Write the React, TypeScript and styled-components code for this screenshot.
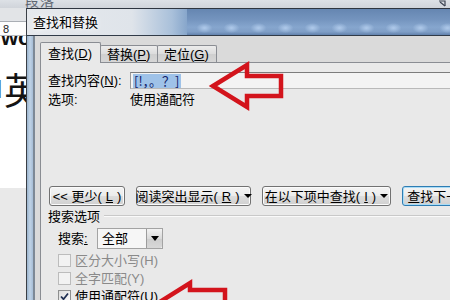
import React from "react";
import styled, { createGlobalStyle } from "styled-components";

const GlobalStyle = createGlobalStyle`
  html, body { margin: 0; padding: 0; }
  body { background: #ffffff; font-family: "Liberation Sans", "Noto Sans CJK SC", sans-serif; }
  #root { width: 450px; height: 300px; }
`;

const UI_FONT = `"Liberation Sans", "Noto Sans CJK SC", sans-serif`;

const Screen = styled.div`
  position: relative;
  width: 450px;
  height: 300px;
  overflow: hidden;
  display: flex;
  flex-direction: column;
  font-family: ${UI_FONT};
  font-size: 13px;
  color: #000;
  background: #fff;
`;

/* ---------- Word ribbon strip behind the dialog ---------- */
const Ribbon = styled.div`
  flex: none;
  height: 8px;
  display: flex;
  align-items: flex-end;
  padding-left: 25px;
  padding-right: 3px;
  overflow: hidden;
  background: linear-gradient(#dde1e6, #d0d4da);
`;

const RibbonLabel = styled.span`
  font-family: "Noto Sans CJK SC", sans-serif;
  font-size: 14px;
  line-height: 16px;
  color: #5d6570;
  letter-spacing: 1px;
`;

const RibbonLauncher = styled.svg`
  margin-left: auto;
  flex: none;
  align-self: flex-start;
`;

const Main = styled.div`
  flex: 1;
  display: flex;
  min-height: 0;
`;

/* ---------- document on the left ---------- */
const Doc = styled.div`
  flex: none;
  width: 26px;
  display: flex;
  flex-direction: column;
  overflow: hidden;
  background: #fff;
`;

const DocRibbonRest = styled.div`
  flex: none;
  height: 13px;
  background: #e2e4e7;
  border-bottom: 1px solid #a9adb3;
`;

const Ruler = styled.div`
  flex: none;
  height: 13px;
  display: flex;
  align-items: center;
  padding-left: 3px;
  font-size: 11px;
  color: #222;
  background: #fdfdfd;
  border-bottom: 1px solid #b7bbc1;
`;

const DocBody = styled.div`
  flex: 1;
  display: flex;
  flex-direction: column;
  background: #fff;
`;

const CutLine = styled.div`
  flex: none;
  height: 10px;
  display: flex;
  align-items: flex-end;
  overflow: hidden;
  padding-left: 1px;
`;

const BigLatin = styled.span`
  font-family: "Liberation Sans", sans-serif;
  font-weight: 700;
  font-size: 22px;
  line-height: 16px;
  color: #111;
  white-space: nowrap;
`;

const BigCjk = styled.div`
  flex: none;
  margin-top: 22px;
  margin-left: -33px;
  font-family: "Noto Sans CJK SC", sans-serif;
  font-size: 37px;
  line-height: 42px;
  color: #141414;
  white-space: nowrap;
`;

const DocPageEnd = styled.div`
  flex: 1;
  margin-top: 78px;
  background: #e9e9e9;
`;

/* ---------- dialog ---------- */
const Dialog = styled.div`
  flex: none;
  width: 440px;
  display: flex;
  flex-direction: column;
  border-left: 1px solid #3a3f46;
`;

const TitleBar = styled.div`
  flex: none;
  height: 26px;
  display: flex;
  border-top: 1px solid #2e3540;
  border-bottom: 1px solid #313b48;
`;

const TitleCaption = styled.div`
  flex: none;
  width: 160px;
  display: flex;
  align-items: center;
  padding-left: 6px;
  box-sizing: border-box;
  background: linear-gradient(90deg, #e6e9ed 0px, #dfe4ea 105px, #a9c0da 145px, #87a6cb 160px);
`;

const TitleGlass = styled.div`
  flex: 1;
  background-color: #809fc6;
  background-image: radial-gradient(ellipse 8px 5px at 50% 50%, rgba(178, 204, 236, 0.95), rgba(178, 204, 236, 0)),
    linear-gradient(180deg, #6586b1 0%, #7494be 40%, #86a6ce 70%, #7f9ec6 88%, #6282ad 100%);
  background-size: 27px 12px, 100% 100%;
  background-position: 4px 13px, 0 0;
  background-repeat: repeat-x, no-repeat;
`;

const TitleText = styled.span`
  font-family: "Noto Sans CJK SC", sans-serif;
  font-size: 13px;
  line-height: 16px;
  color: #000;
  white-space: nowrap;
  text-shadow: 0 0 6px #fff, 0 0 3px #fff;
`;

const DialogBody = styled.div`
  flex: 1;
  display: flex;
  min-height: 0;
`;

const FrameSide = styled.div`
  flex: none;
  width: 6px;
  background: linear-gradient(90deg, #9ab4ce, #c0d3e6 50%, #a6bdd6);
  border-right: 2px solid #7d8996;
`;

const Content = styled.div`
  flex: 1;
  display: flex;
  flex-direction: column;
  padding-left: 5px;
  background: #dadada;
`;

const TabStrip = styled.div`
  flex: none;
  height: 26px;
  display: flex;
  align-items: flex-end;
`;

const Tab = styled.div<{ $active?: boolean; $width: number }>`
  flex: none;
  box-sizing: border-box;
  width: ${(p) => p.$width}px;
  height: ${(p) => (p.$active ? 21 : 17)}px;
  margin-bottom: ${(p) => (p.$active ? -1 : 0)}px;
  position: relative;
  z-index: ${(p) => (p.$active ? 1 : 0)};
  display: flex;
  align-items: center;
  padding-left: ${(p) => (p.$active ? 7 : 6)}px;
  border: 1px solid #8a8d93;
  border-bottom: ${(p) => (p.$active ? "none" : "0")};
  border-radius: 2px 2px 0 0;
  background: ${(p) =>
    p.$active ? "#e9e9e9" : "linear-gradient(#ececec, #dcdcdc 50%, #cfcfcf 50%, #d6d6d6)"};
  font-size: 13px;
  line-height: 15px;
  color: #000;
  white-space: nowrap;
  & + & {
    margin-left: -1px;
  }
`;

const TabPanel = styled.div`
  flex: 1;
  display: flex;
  flex-direction: column;
  padding: 9px 0 0 7px;
  border-top: 1px solid #8a8d93;
  border-left: 1px solid #8a8d93;
  background: #e9e9e9;
`;

const FieldRow = styled.div<{ $top?: number }>`
  flex: none;
  display: flex;
  align-items: center;
  margin-top: ${(p) => p.$top ?? 0}px;
  height: 17px;
`;

const FieldLabel = styled.span`
  flex: none;
  width: 82px;
  font-size: 13px;
  line-height: 15px;
  white-space: nowrap;
`;

const TextInput = styled.div`
  flex: 1;
  box-sizing: border-box;
  height: 17px;
  display: flex;
  align-items: center;
  padding-left: 2px;
  background: #f3f3f3;
  border-top: 1px solid #7c7c7c;
  border-left: 1px solid #9a9a9a;
  border-bottom: 1px solid #b9b9b9;
`;

const Selection = styled.span`
  background: #9fc2e8;
  color: #12226a;
  font-family: "Noto Sans CJK SC", sans-serif;
  font-size: 13px;
  line-height: 14px;
  padding: 0 1px;
  white-space: nowrap;
`;

const FieldValue = styled.span`
  font-size: 13px;
  line-height: 15px;
  white-space: nowrap;
`;

const ButtonRow = styled.div`
  flex: none;
  display: flex;
  gap: 11px;
  margin-top: 78px;
  padding-left: 1px;
`;

const Button = styled.div<{ $width: number; $default?: boolean }>`
  flex: none;
  box-sizing: border-box;
  width: ${(p) => p.$width}px;
  height: 20px;
  display: flex;
  align-items: center;
  justify-content: center;
  gap: 4px;
  border: 1px solid ${(p) => (p.$default ? "#2f7db3" : "#727272")};
  border-radius: 3px;
  background: linear-gradient(#f4f4f4 0%, #ececec 48%, #dddddd 52%, #d0d0d0 100%);
  box-shadow: inset 0 0 0 1px ${(p) => (p.$default ? "#a9dcf6" : "#fbfbfb")};
  font-size: 13px;
  line-height: 15px;
  white-space: nowrap;
  color: #000;
`;

const Caret = styled.span<{ $w?: number; $h?: number }>`
  flex: none;
  width: 0;
  height: 0;
  border-left: ${(p) => p.$w ?? 4}px solid transparent;
  border-right: ${(p) => p.$w ?? 4}px solid transparent;
  border-top: ${(p) => p.$h ?? 4}px solid #000;
`;

const GroupHeader = styled.div`
  flex: none;
  display: flex;
  align-items: center;
  gap: 4px;
  margin-top: 2px;
  height: 16px;
`;

const GroupTitle = styled.span`
  font-size: 13px;
  line-height: 15px;
  white-space: nowrap;
`;

const GroupRule = styled.span`
  flex: 1;
  height: 0;
  border-top: 1px solid #c9c9c9;
  border-bottom: 1px solid #fafafa;
`;

const GroupBody = styled.div`
  flex: none;
  display: flex;
  flex-direction: column;
  padding-left: 10px;
`;

const SearchRow = styled.div`
  flex: none;
  display: flex;
  align-items: center;
  margin-top: 4px;
  height: 21px;
  gap: 6px;
`;

const SearchLabel = styled.span`
  flex: none;
  width: 33px;
  font-size: 13px;
  line-height: 15px;
  white-space: nowrap;
`;

const Select = styled.div`
  flex: none;
  box-sizing: border-box;
  width: 66px;
  height: 21px;
  display: flex;
  border: 1px solid #a3a3a3;
  background: #f6f6f6;
`;

const SelectValue = styled.span`
  flex: 1;
  padding-left: 4px;
  font-size: 13px;
  line-height: 19px;
  white-space: nowrap;
`;

const SelectButton = styled.span`
  flex: none;
  width: 15px;
  display: flex;
  align-items: center;
  justify-content: center;
  border-left: 1px solid #9c9c9c;
  border-radius: 0 2px 2px 0;
  background: linear-gradient(#f2f2f2, #dadada 50%, #cdcdcd 51%, #d8d8d8);
`;

const CheckRow = styled.div<{ $first?: boolean }>`
  flex: none;
  display: flex;
  align-items: center;
  gap: 4px;
  height: 18px;
  margin-top: ${(p) => (p.$first ? 2 : 0)}px;
`;

const CheckBox = styled.span<{ $disabled?: boolean }>`
  flex: none;
  box-sizing: border-box;
  width: 13px;
  height: 13px;
  display: flex;
  align-items: center;
  justify-content: center;
  border: 1px solid ${(p) => (p.$disabled ? "#bcbcbc" : "#8e8f8f")};
  background: ${(p) =>
    p.$disabled ? "#f2f2f2" : "linear-gradient(135deg, #dcdcdc, #fbfbfb)"};
`;

const CheckLabel = styled.span<{ $disabled?: boolean }>`
  font-size: 13px;
  line-height: 15px;
  white-space: nowrap;
  color: ${(p) => (p.$disabled ? "#8a8a8a" : "#000")};
`;

/* ---------- red annotation arrows ---------- */
const Annotations = styled.svg`
  position: absolute;
  left: 0;
  top: 0;
  width: 450px;
  height: 300px;
  pointer-events: none;
`;

export default function App() {
  return (
    <>
      <GlobalStyle />
      <Screen>
        <Ribbon>
          <RibbonLabel>段落</RibbonLabel>
          <RibbonLauncher width="9" height="7" viewBox="0 0 9 7">
            <path d="M1 1h6v5" fill="none" stroke="#3b4250" strokeWidth="1.2" />
            <path d="M2 2l5 4" stroke="#3b4250" strokeWidth="1.2" />
          </RibbonLauncher>
        </Ribbon>
        <Main>
          <Doc>
            <DocRibbonRest />
            <Ruler>8</Ruler>
            <DocBody>
              <CutLine>
                <BigLatin>wo</BigLatin>
              </CutLine>
              <BigCjk>中英</BigCjk>
              <DocPageEnd />
            </DocBody>
          </Doc>
          <Dialog>
            <TitleBar>
              <TitleCaption>
                <TitleText>查找和替换</TitleText>
              </TitleCaption>
              <TitleGlass />
            </TitleBar>
            <DialogBody>
              <FrameSide />
              <Content>
                <TabStrip>
                  <Tab $active $width={61}>
                    查找(<u>D</u>)
                  </Tab>
                  <Tab $width={58}>
                    替换(<u>P</u>)
                  </Tab>
                  <Tab $width={60}>
                    定位(<u>G</u>)
                  </Tab>
                </TabStrip>
                <TabPanel>
                  <FieldRow>
                    <FieldLabel>
                      查找内容(<u>N</u>):
                    </FieldLabel>
                    <TextInput>
                      <Selection>[!，。？]</Selection>
                    </TextInput>
                  </FieldRow>
                  <FieldRow $top={2}>
                    <FieldLabel>选项:</FieldLabel>
                    <FieldValue>使用通配符</FieldValue>
                  </FieldRow>
                  <ButtonRow>
                    <Button $width={76}>
                      &lt;&lt; 更少(<u>L</u>)
                    </Button>
                    <Button $width={115}>
                      阅读突出显示(<u>R</u>)
                      <Caret />
                    </Button>
                    <Button $width={129}>
                      在以下项中查找(<u>I</u>)
                      <Caret />
                    </Button>
                    <Button $width={100} $default>
                      查找下一处(<u>F</u>)
                    </Button>
                  </ButtonRow>
                  <GroupHeader>
                    <GroupTitle>搜索选项</GroupTitle>
                    <GroupRule />
                  </GroupHeader>
                  <GroupBody>
                    <SearchRow>
                      <SearchLabel>
                        搜索<u>:</u>
                      </SearchLabel>
                      <Select>
                        <SelectValue>全部</SelectValue>
                        <SelectButton>
                          <Caret $w={4} $h={5} />
                        </SelectButton>
                      </Select>
                    </SearchRow>
                    <CheckRow $first>
                      <CheckBox $disabled />
                      <CheckLabel $disabled>区分大小写(H)</CheckLabel>
                    </CheckRow>
                    <CheckRow>
                      <CheckBox $disabled />
                      <CheckLabel $disabled>全字匹配(Y)</CheckLabel>
                    </CheckRow>
                    <CheckRow>
                      <CheckBox>
                        <svg width="11" height="11" viewBox="0 0 11 11">
                          <path
                            d="M2 5.5 L4.5 8.2 L9 2.5"
                            fill="none"
                            stroke="#1f2f52"
                            strokeWidth="1.8"
                          />
                        </svg>
                      </CheckBox>
                      <CheckLabel>
                        使用通配符(<u>U</u>)
                      </CheckLabel>
                    </CheckRow>
                  </GroupBody>
                </TabPanel>
              </Content>
            </DialogBody>
          </Dialog>
        </Main>
        <Annotations viewBox="0 0 450 300">
          <path
            d="M213 86 L247 65 L247 76 L281 76 L281 96 L247 96 L247 107 Z"
            fill="none"
            stroke="#d3141c"
            strokeWidth="4.5"
            strokeLinejoin="miter"
          />
          <path
            d="M155 305 L190 283 L190 290 L225 290 L225 322 L190 322 L190 330 Z"
            fill="none"
            stroke="#d3141c"
            strokeWidth="4.5"
            strokeLinejoin="miter"
          />
        </Annotations>
      </Screen>
    </>
  );
}
